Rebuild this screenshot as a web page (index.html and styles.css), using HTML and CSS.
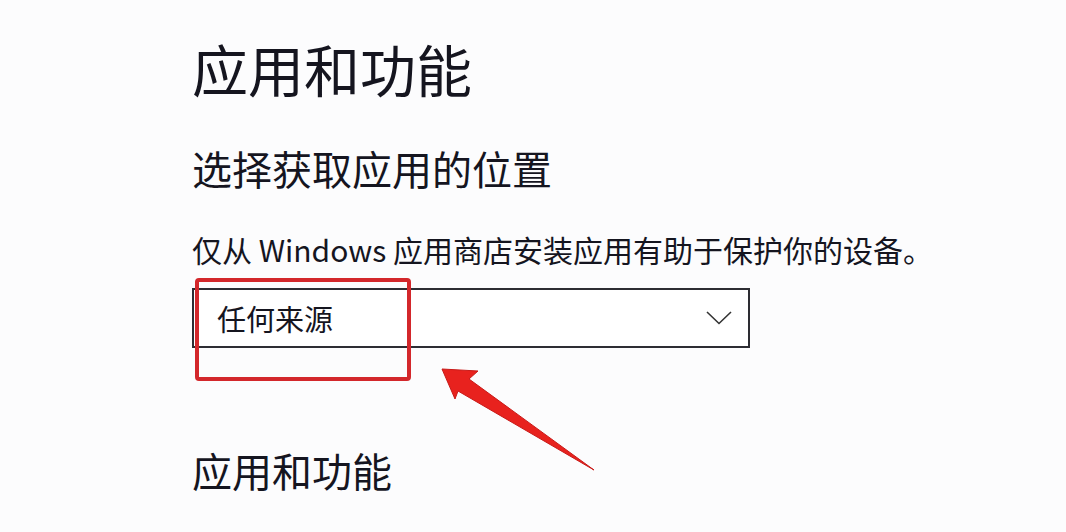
FILE: index.html
```html
<!DOCTYPE html>
<html lang="zh-CN">
<head>
<meta charset="utf-8">
<title>应用和功能</title>
<link rel="stylesheet" href="styles.css">
</head>
<body>
<main class="page">
  <h1 class="title">应用和功能</h1>
  <h2 class="subtitle">选择获取应用的位置</h2>
  <p class="desc">仅从 Windows 应用商店安装应用有助于保护你的设备。</p>
  <div class="select-wrap">
    <div class="select">
      <span class="select-value">任何来源</span>
      <svg class="chevron" width="26" height="14" viewBox="0 0 26 14"><path d="M1 1 L13 12.5 L25 1" fill="none" stroke="#333" stroke-width="1.6"/></svg>
    </div>
    <div class="highlight"></div>
  </div>
  <h2 class="section">应用和功能</h2>
  <svg class="arrow" width="1066" height="532" viewBox="0 0 1066 532">
    <polygon points="442,369 478,371 469,379 594,470 458,391 455,399" fill="#e8221e" stroke="#c81a18" stroke-width="1" stroke-linejoin="round"/>
  </svg>
</main>
</body>
</html>
```
FILE: styles.css
```css
html, body {
  margin: 0;
  padding: 0;
  background: #fcfcfd;
}
.page {
  position: relative;
  width: 1066px;
  height: 532px;
  overflow: hidden;
  padding: 40px 0 0 192px;
  box-sizing: border-box;
  font-family: "Segoe UI", "Noto Sans CJK SC", "Noto Sans", sans-serif;
  color: #15151f;
}
.title {
  margin: 0;
  font-size: 56px;
  line-height: 56px;
  font-weight: 400;
}
.subtitle {
  margin: 52px 0 0 0;
  font-size: 40px;
  line-height: 40px;
  font-weight: 400;
}
.desc {
  margin: 46px 0 0 0;
  font-size: 30px;
  line-height: 30px;
  font-weight: 400;
}
.select-wrap {
  position: relative;
  margin-top: 24px;
  width: 558px;
}
.select {
  height: 60px;
  box-sizing: border-box;
  border: 2px solid #2d2d33;
  display: flex;
  align-items: center;
  justify-content: space-between;
  padding: 0 16px 0 23px;
  background: #fff;
}
.select-value {
  font-size: 29px;
  line-height: 29px;
}
.chevron {
  display: block;
}
.highlight {
  position: absolute;
  left: 3px;
  top: -10px;
  width: 216px;
  height: 103px;
  box-sizing: border-box;
  border: 4px solid #d3272b;
  border-radius: 4px;
}
.section {
  margin: 102px 0 0 0;
  font-size: 40px;
  line-height: 40px;
  font-weight: 400;
}
.arrow {
  position: absolute;
  left: 0;
  top: 0;
  pointer-events: none;
}
```
